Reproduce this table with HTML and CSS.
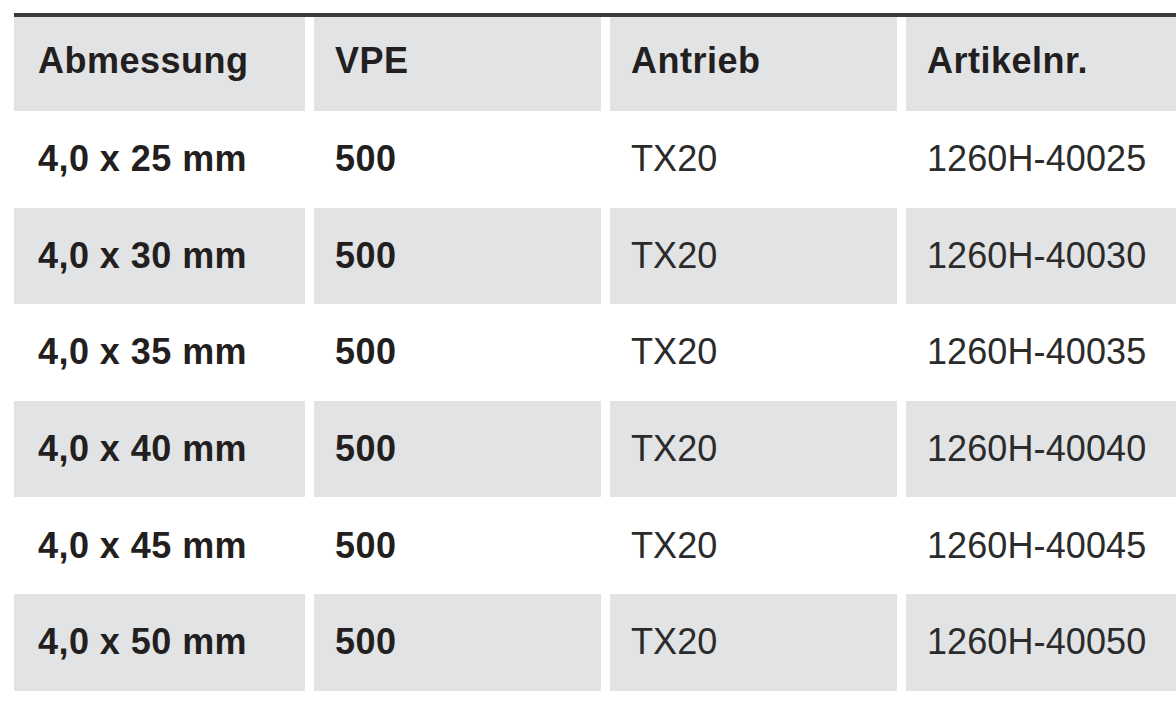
FILE: index.html
```html
<!DOCTYPE html>
<html lang="de">
<head>
<meta charset="utf-8">
<title>Abmessungen</title>
<link rel="stylesheet" href="styles.css">
</head>
<body>
<div class="table" role="table">
  <div class="row head" role="row">
    <div class="cell c1" role="columnheader">Abmessung</div>
    <div class="cell" role="columnheader">VPE</div>
    <div class="cell" role="columnheader">Antrieb</div>
    <div class="cell" role="columnheader">Artikelnr.</div>
  </div>
  <div class="row" role="row">
    <div class="cell c1 b">4,0 x 25 mm</div><div class="cell b">500</div><div class="cell">TX20</div><div class="cell">1260H-40025</div>
  </div>
  <div class="row alt" role="row">
    <div class="cell c1 b">4,0 x 30 mm</div><div class="cell b">500</div><div class="cell">TX20</div><div class="cell">1260H-40030</div>
  </div>
  <div class="row" role="row">
    <div class="cell c1 b">4,0 x 35 mm</div><div class="cell b">500</div><div class="cell">TX20</div><div class="cell">1260H-40035</div>
  </div>
  <div class="row alt" role="row">
    <div class="cell c1 b">4,0 x 40 mm</div><div class="cell b">500</div><div class="cell">TX20</div><div class="cell">1260H-40040</div>
  </div>
  <div class="row" role="row">
    <div class="cell c1 b">4,0 x 45 mm</div><div class="cell b">500</div><div class="cell">TX20</div><div class="cell">1260H-40045</div>
  </div>
  <div class="row alt" role="row">
    <div class="cell c1 b">4,0 x 50 mm</div><div class="cell b">500</div><div class="cell">TX20</div><div class="cell">1260H-40050</div>
  </div>
</div>
</body>
</html>
```
FILE: styles.css
```css
html, body {
  margin: 0;
  padding: 0;
  background: #ffffff;
  overflow: hidden;
}
body {
  width: 1176px;
  height: 704px;
  font-family: "Liberation Sans", Arial, sans-serif;
  color: #2a2a2a;
}
.table {
  margin: 13px 0 0 14px;
  width: 1182px;
  border-top: 4px solid #3b3b3b;
}
.row {
  display: grid;
  grid-template-columns: 291px 287px 287px 290px;
  column-gap: 9px;
  height: 96.6px;
}
.row.head {
  height: 94px;
}
.cell {
  display: flex;
  align-items: center;
  padding-left: 21px;
  font-size: 36px;
  font-weight: 400;
  color: #2b2b2b;
  letter-spacing: 0.1px;
}
.cell.c1 {
  padding-left: 24px;
}
.head .cell {
  background: #e2e3e4;
  font-weight: 700;
  color: #231f20;
  padding-bottom: 6px;
  letter-spacing: 0.5px;
}
.alt .cell {
  background: #e2e3e4;
}
.cell.b {
  font-weight: 700;
  color: #231f20;
  letter-spacing: 0.45px;
}
```
